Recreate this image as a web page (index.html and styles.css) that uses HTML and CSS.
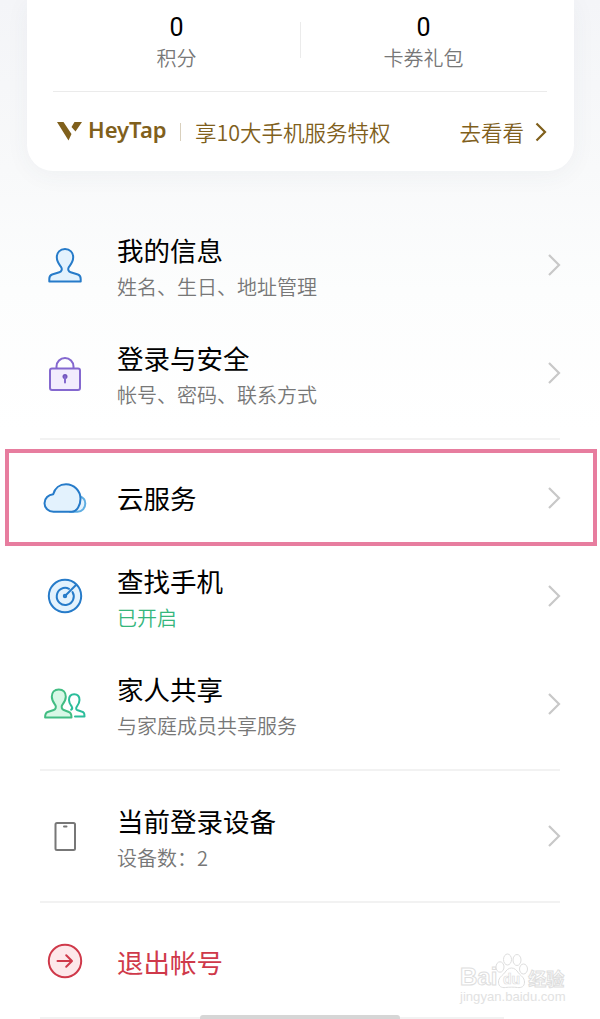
FILE: index.html
```html
<!DOCTYPE html>
<html lang="zh-CN">
<head>
  <meta charset="UTF-8"/>
  <title>帐号</title>
  <link rel="stylesheet" href="styles.css">
</head>
<body>
  <div class="card">
    <div class="stats">
      <div class="stat"><b>0</b><span>积分</span></div>
      <div class="stat"><b>0</b><span>卡券礼包</span></div>
    </div>
    <div class="promo">
      <svg class="logo" width="25" height="20" viewBox="0 0 25 20"><path d="M0 1h6.500l8 12-3 6.500z M17.500 1H25l-6.500 9.500-4-4.500z"/></svg>
      <span class="brand">HeyTap</span>
      <span class="promo-text">享10大手机服务特权</span>
      <span class="go">去看看</span>
      <svg class="go-arrow" width="12" height="20" viewBox="0 0 12 20"><path d="M1.500 1.500L10 10 1.500 18.500"/></svg>
    </div>
  </div>

  <div class="list">
    <div class="row">
      <svg class="icon blue" viewBox="0 0 44 44"><path d="M22 6c-5 0-8.200 3.500-8.200 8.200 0 4.400 2.200 7 4.200 9.700 1.500 2.200.7 4.500-1.700 5.300l-7.200 2.300c-2.300.8-2.800 2.300-2.800 4.600v2.500h31.400v-2.500c0-2.300-.6-3.800-2.800-4.600l-7.200-2.300c-2.400-.8-3.200-3.100-1.700-5.300 2-2.700 4.200-5.300 4.200-9.700C30.200 9.500 27 6 22 6z"/></svg>
      <div class="info"><h3>我的信息</h3><p>姓名、生日、地址管理</p></div>
      <svg class="arrow" viewBox="0 0 14 24"><path d="M2 2l10 10L2 22"/></svg>
    </div>
    <div class="row">
      <svg class="icon purple" viewBox="0 0 44 44"><path class="nofill" d="M13.500 17v-1.500a8.500 8.500 0 0 1 17 0V17"/><rect x="7" y="17.500" width="30" height="21.500" rx="2"/><circle class="dot" cx="22" cy="25.500" r="2.500"/><path d="M22 25.500v6"/></svg>
      <div class="info"><h3>登录与安全</h3><p>帐号、密码、联系方式</p></div>
      <svg class="arrow" viewBox="0 0 14 24"><path d="M2 2l10 10L2 22"/></svg>
    </div>
    <div class="line"></div>
    <div class="row single selected">
      <svg class="icon blue" viewBox="0 0 44 44"><path class="light" d="M36.500 20.500c3.500.7 5.800 3.300 5.800 7 0 4.500-3.300 8.300-7.800 8.300H27"/><path d="M10.500 35.800h18.300c5 0 8.700-6.300 8.700-13 0-8-6.500-14.500-14.500-14.500-6.400 0-11.200 3.900-12.800 10-4.700.4-8.700 4-8.700 8.900s4 8.600 9 8.600z"/></svg>
      <div class="info"><h3>云服务</h3></div>
      <svg class="arrow" viewBox="0 0 14 24"><path d="M2 2l10 10L2 22"/></svg>
    </div>
    <div class="row">
      <svg class="icon blue" viewBox="0 0 44 44"><circle cx="22" cy="22" r="16.200"/><path d="M26 14.800A8.500 8.500 0 1 0 29.500 18"/><path d="M22 22L33 11"/><circle class="dot" cx="22" cy="22" r="1.200"/></svg>
      <div class="info"><h3>查找手机</h3><p class="on">已开启</p></div>
      <svg class="arrow" viewBox="0 0 14 24"><path d="M2 2l10 10L2 22"/></svg>
    </div>
    <div class="row">
      <svg class="icon green" viewBox="0 0 44 44"><path class="teal nofill" d="M32 34.500h9.500c0-3.500-.5-4.300-3-5l-3.800-1.200c-1.600-.5-2-2-1-3.600 1.500-2.200 2.800-3.700 2.800-6.700 0-3.400-2-5.700-5.300-5.700-3.200 0-5.200 2.300-5.200 5.700 0 3 1.300 4.500 2.700 6.500.8 1.300.6 2.500-.5 3.200"/><path d="M15.800 7.500c-4.400 0-7 3-7 7.200 0 3.700 1.800 6 3.400 8.200 1.300 1.900.6 4.400-1.500 5.100l-6 2c-2 .7-2.600 1.800-2.600 5.500h26.400c0-3.700-.6-4.800-2.600-5.500l-5.100-2c-2-.7-2.800-3.200-1.500-5.100 1.700-2.200 3.500-4.500 3.500-8.200 0-4.200-2.600-7.200-7-7.200z"/></svg>
      <div class="info"><h3>家人共享</h3><p>与家庭成员共享服务</p></div>
      <svg class="arrow" viewBox="0 0 14 24"><path d="M2 2l10 10L2 22"/></svg>
    </div>
    <div class="line"></div>
    <div class="row">
      <svg class="icon gray" viewBox="0 0 44 44"><rect x="12.500" y="9" width="19.500" height="27" rx="1.500"/><path d="M21 12.500h2.500"/></svg>
      <div class="info"><h3>当前登录设备</h3><p>设备数：2</p></div>
      <svg class="arrow" viewBox="0 0 14 24"><path d="M2 2l10 10L2 22"/></svg>
    </div>
    <div class="line"></div>
    <div class="row single exit">
      <svg class="icon red" viewBox="0 0 44 44"><circle cx="22" cy="22" r="16.200"/><path class="nofill" d="M14.500 22h14M23.200 16.200l5.800 5.800-5.800 5.800"/></svg>
      <div class="info"><h3>退出帐号</h3></div>
    </div>
    <div class="line last"></div>
  </div>

  <div class="home-bar"></div>

  <!-- watermark -->
  <div class="mark">
    <div class="mark-top">
      <span>Bai</span>
      <svg width="34" height="36" viewBox="0 0 34 36"><ellipse cx="5" cy="14" rx="4" ry="5.200"/><ellipse cx="12.500" cy="6.500" rx="4" ry="5.500"/><ellipse cx="22" cy="7" rx="4" ry="5.500"/><ellipse cx="28.500" cy="16" rx="4" ry="5"/><path d="M16.500 15c-3 0-5 2-7 5-2 2.500-6 4.500-6 9s3 6 7 5.500c4-.5 8-.5 12 0s7-1 7-5.500-4-6.500-6-9c-2-3-4-5-7-5z"/><text x="8" y="31">du</text></svg>
      <span class="cn">经验</span>
    </div>
    <div class="mark-url">jingyan.baidu.com</div>
  </div>
</body>
</html>
```
FILE: styles.css
```css
* { margin:0; padding:0; box-sizing:border-box }
body {
  position:relative; height:1019px; overflow:hidden;
  font-family:"Noto Sans CJK SC",sans-serif;
  background:linear-gradient(#f4f5f8 0, #f8f9fa 170px, #fcfdfd 290px, #fff 430px);
}
svg { flex:none; fill:none }

/* Top card */
.card {
  height:171px; margin:0 26px 0 27px; padding:0 27px;
  background:#fff; border-radius:0 0 26px 26px;
  box-shadow:0 4px 24px rgba(60,70,90,.05);
}
.stats {
  display:flex; height:92px; margin:0 0 0 -1px;
  border-bottom:1px solid #ebebeb;
}
.stat {
  flex:1; display:flex; flex-direction:column; align-items:center;
  padding-top:12px; position:relative;
}
.stat b {
  font:400 25px/32px Roboto,sans-serif; color:#000;
}
.stat span { font-size:20px; line-height:28px; color:#777; font-weight:350 }
.stat + .stat::before {
  content:""; position:absolute; left:0; top:22px;
  width:1px; height:36px; background:#ebebeb;
}
.promo {
  display:flex; align-items:center; height:79px; padding:2px 0 0 3px;
  color:#80601c; font-size:21.5px; font-weight:350;
}
.logo { fill:#80601c; margin-top:-3px }
.brand {
  margin:-7px 0 0 6px; width:79px;
  font:600 22px/30px "Noto Sans",sans-serif;
}
.promo-text {
  margin:-1px 0 0 13px; padding-left:14px; line-height:18px;
  border-left:1px solid #d9d0bd;
}
.go { margin:-2px 0 0 auto }
.go-arrow { margin:-1px 0 0 11px; stroke:#80601c; stroke-width:2.2 }

/* List */
.list { padding-top:40px }
.row {
  display:flex; align-items:center;
  height:108px; padding:0 39px 0 43px;
}
.icon { width:44px; height:44px; stroke-width:2; stroke-linecap:round; stroke-linejoin:round }
.info { flex:1; margin-left:30px; padding-top:7px }
.info h3 { margin-bottom:1px; font-size:26.5px; line-height:36px; font-weight:400; color:#000 }
.info p { font-size:20px; line-height:36px; font-weight:350; color:#777 }
.info .on { color:#35b67c }
.arrow { width:14px; height:24px; stroke:#c8c8c8; stroke-width:2.2 }
.single { height:91px }
.single .info { padding-top:2px }
.selected {
  height:97px; margin:-2px 3px -4px 5px; padding:0 32px 0 34px;
  border:4px solid #e77d9f;
}
.exit { height:94px }
.exit h3 { color:#cf394a }
.line { height:2px; margin:11px 40px; background:#f2f2f2 }
.last { margin:9px 96px 0 40px }

.blue { stroke:#267bc9; fill:#e3f2fd }
.blue .light { stroke:#5faee2 }
.purple { stroke:#8468cf; fill:#f2ecfd }
.purple .dot { fill:#7456bd; stroke:none }
.green { stroke:#42bd83; fill:#d8f8e6 }
.green .teal { stroke:#2cbd9b }
.gray { stroke:#777; fill:#fff }
.red { stroke:#cf394a; fill:#fde8ea }
.nofill { fill:none }

.home-bar {
  position:absolute; left:200px; top:1015px;
  width:200px; height:8px; border-radius:3px; background:#d6d6d6;
}

/* Watermark */
.mark { position:absolute; left:460px; top:953px; color:#fff }
.mark-top { display:flex; align-items:flex-end; height:36px }
.mark-top span {
  font:700 24px/25px "Liberation Sans",sans-serif;
  -webkit-text-stroke:1px #dedede;
}
.mark-top svg { margin:0 -1px 0 -2px }
.mark-top .cn { font:700 18px/22px "Noto Sans CJK SC",sans-serif }
.mark svg { stroke:#dedede; fill:#fff }
.mark text { font:700 14px "Liberation Sans",sans-serif; stroke-width:.7 }
.mark-url {
  font:13.1px/16px "Liberation Sans",sans-serif; color:#e2e2e2;
}
```
